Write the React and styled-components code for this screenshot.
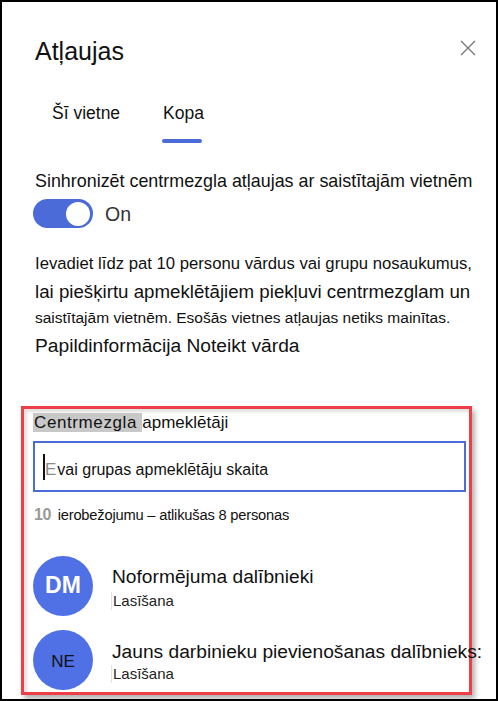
import React from 'react';
import styled, { createGlobalStyle } from 'styled-components';

const Global = createGlobalStyle`
  body {
    margin: 0;
    background: #fff;
    font-family: "Liberation Sans", Arial, sans-serif;
    color: #111;
  }
`;

const Frame = styled.div`
  box-sizing: border-box;
  width: 498px;
  height: 701px;
  border: 2px solid #000;
  padding: 34px 24px 0 19px;
  display: flex;
  flex-direction: column;
  overflow: hidden;
`;

const Header = styled.div`
  display: flex;
  justify-content: space-between;
  align-items: flex-start;
  padding-left: 14px;
`;

const Title = styled.h1`
  margin: 0;
  font-size: 25px;
  line-height: 30px;
  font-weight: 400;
  color: #111;
`;

const Close = styled.button`
  border: none;
  background: none;
  padding: 0;
  margin: 4px -4px 0 0;
  width: 16px;
  height: 16px;
  cursor: pointer;
  display: flex;
`;

const Tabs = styled.div`
  display: flex;
  gap: 43px;
  margin: 37px 0 0 31px;
`;

const Tab = styled.div`
  position: relative;
  font-size: 17.5px;
  line-height: 21px;
  padding-bottom: 19px;
  color: #111;

  &::after {
    content: '';
    display: ${p => (p.$active ? 'block' : 'none')};
    position: absolute;
    left: -1px;
    bottom: 0;
    width: 40px;
    height: 4px;
    border-radius: 2px;
    background: #4a6bd8;
  }
`;

const Section = styled.div`
  padding-left: 14px;
`;

const SyncLabel = styled.div`
  margin-top: 28.3px;
  font-size: 17.9px;
  line-height: 20px;
  white-space: nowrap;
  color: #111;
`;

const ToggleRow = styled.div`
  display: flex;
  align-items: center;
  gap: 12px;
  margin: 8.2px 0 0 -2px;
`;

const Toggle = styled.div`
  position: relative;
  width: 60px;
  height: 29px;
  border-radius: 15px;
  background: #4a6bd8;

  &::after {
    content: '';
    position: absolute;
    right: 3px;
    top: 2.5px;
    width: 24px;
    height: 24px;
    border-radius: 50%;
    background: #fff;
  }
`;

const ToggleText = styled.span`
  font-size: 19.5px;
  line-height: 23px;
  color: #333;
  margin-top: 2px;
`;

const Info = styled.div`
  margin-top: 26.2px;
`;

const Line = styled.div`
  font-size: ${p => p.$size}px;
  line-height: ${p => p.$lh}px;
  margin-top: ${p => p.$gap || 0}px;
  white-space: nowrap;
  color: #111;
`;

const Callout = styled.section`
  margin-top: 49.6px;
  border: 3px solid #ee3f48;
  box-shadow: 3px 4px 5px rgba(0, 0, 0, 0.3), inset 3px 3px 3px rgba(0, 0, 0, 0.12);
  padding: 3.4px 0 2px 10px;
`;

const FieldLabel = styled.div`
  font-size: 17px;
  line-height: 20px;
  color: #111;
  white-space: nowrap;
`;

const Mark = styled.span`
  background: #c8c8c8;
  letter-spacing: 0.6px;
  padding-left: 1px;
  margin-left: -1px;
`;

const Input = styled.div`
  box-sizing: border-box;
  width: 433px;
  height: 51px;
  margin: 8.6px 0 0 -1px;
  border: 2px solid #4a6bd8;
  display: flex;
  align-items: center;
  padding-left: 8px;
`;

const Caret = styled.span`
  width: 2px;
  height: 26px;
  background: #111;
`;

const InputText = styled.span`
  font-size: 16px;
  line-height: 20px;
  margin-top: 6.4px;
  color: #111;
  white-space: nowrap;
`;

const Ghost = styled.span`
  color: #8a8a8a;
  font-size: 17px;
  margin-right: 1px;
`;

const Limit = styled.div`
  margin-top: 12.3px;
  font-size: 14.7px;
  line-height: 19px;
  letter-spacing: -0.2px;
  color: #111;
  white-space: nowrap;
`;

const LimitNum = styled.span`
  color: #9a9a9a;
  font-weight: 700;
  font-size: 16px;
  letter-spacing: -0.5px;
  margin-right: 3px;
`;

const Person = styled.div`
  display: flex;
  gap: 19px;
  margin-top: ${p => p.$gap}px;
  margin-left: -1px;
`;

const Avatar = styled.div`
  flex: none;
  width: 60px;
  height: 60px;
  border-radius: 50%;
  background: #5070e6;
  display: flex;
  align-items: center;
  justify-content: center;
  color: ${p => (p.$dark ? '#111' : '#fff')};
  font-size: ${p => (p.$dark ? 17 : 23)}px;
  font-weight: ${p => (p.$dark ? 400 : 700)};
  padding-top: ${p => (p.$dark ? 4 : 0)}px;
  box-sizing: border-box;
`;

const PersonText = styled.div`
  padding-top: ${p => p.$top}px;
  display: flex;
  flex-direction: column;
  gap: ${p => p.$gap}px;
  white-space: nowrap;
`;

const Name = styled.div`
  font-size: 19.2px;
  line-height: 22px;
  color: #111;
`;

const Role = styled.div`
  font-size: 15px;
  line-height: 18px;
  color: #222;
  border-left: 1px solid #e2e2e2;
  padding-left: 1px;
  margin-left: -1px;
`;

const people = [
  { initials: 'DM', name: 'Noformējuma dalībnieki', gap: 31, top: 10, inner: 4 },
  { initials: 'NE', name: 'Jauns darbinieku pievienošanas dalībnieks:', gap: 14, top: 11.5, inner: 2, dark: true },
];

export default function App() {
  return (
    <>
      <Global />
      <Frame>
        <Header>
          <Title>Atļaujas</Title>
          <Close aria-label="Aizvērt">
            <svg width="16" height="16" viewBox="0 0 16 16">
              <path d="M1 1 L15 15 M15 1 L1 15" stroke="#7a7a7a" strokeWidth="1.4" fill="none" />
            </svg>
          </Close>
        </Header>

        <Tabs>
          <Tab>Šī vietne</Tab>
          <Tab $active>Kopa</Tab>
        </Tabs>

        <Section>
          <SyncLabel>Sinhronizēt centrmezgla atļaujas ar saistītajām vietnēm</SyncLabel>
          <ToggleRow>
            <Toggle />
            <ToggleText>On</ToggleText>
          </ToggleRow>

          <Info>
            <Line $size={16.7} $lh={18}>Ievadiet līdz pat 10 personu vārdus vai grupu nosaukumus,</Line>
            <Line $size={18.7} $lh={22} $gap={8.3}>lai piešķirtu apmeklētājiem piekļuvi centrmezglam un</Line>
            <Line $size={15.5} $lh={18} $gap={6.1}>saistītajām vietnēm. Esošās vietnes atļaujas netiks mainītas.</Line>
            <Line $size={19.2} $lh={22} $gap={7.75}>Papildinformācija Noteikt vārda</Line>
          </Info>
        </Section>

        <Callout>
          <FieldLabel>
            <Mark>Centrmezgla </Mark>apmeklētāji
          </FieldLabel>
          <Input>
            <Caret />
            <InputText>
              <Ghost>E</Ghost>vai grupas apmeklētāju skaita
            </InputText>
          </Input>
          <Limit>
            <LimitNum>10</LimitNum> ierobežojumu – atlikušas 8 personas
          </Limit>
          {people.map(p => (
            <Person key={p.initials} $gap={p.gap}>
              <Avatar $dark={p.dark}>{p.initials}</Avatar>
              <PersonText $top={p.top} $gap={p.inner}>
                <Name>{p.name}</Name>
                <Role>Lasīšana</Role>
              </PersonText>
            </Person>
          ))}
        </Callout>
      </Frame>
    </>
  );
}
